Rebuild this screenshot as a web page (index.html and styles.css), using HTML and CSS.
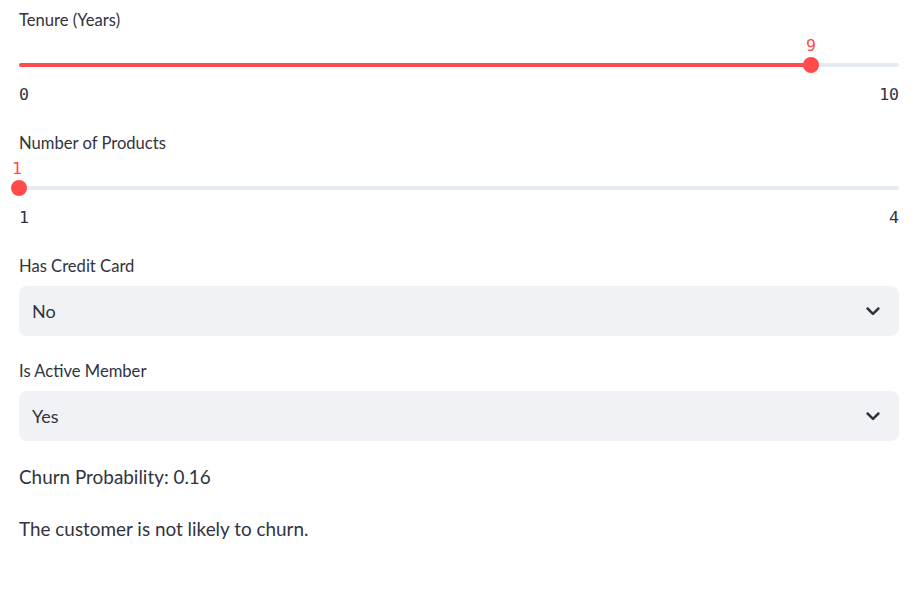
FILE: index.html
```html
<!DOCTYPE html>
<html>
<head>
<meta charset="utf-8">
<link rel="stylesheet" href="styles.css">
</head>
<body>
<div class="main">
  <div class="slider">
    <div class="label">Tenure (Years)</div>
    <div class="track">
      <div class="fill" style="width:90%"></div>
      <div class="thumb" style="left:90%"><span class="val">9</span></div>
    </div>
    <div class="ticks"><span>0</span><span>10</span></div>
  </div>
  <div class="slider">
    <div class="label">Number of Products</div>
    <div class="track">
      <div class="fill" style="width:0%"></div>
      <div class="thumb" style="left:0%"><span class="val start">1</span></div>
    </div>
    <div class="ticks"><span>1</span><span>4</span></div>
  </div>
  <div class="select-field">
    <div class="label">Has Credit Card</div>
    <div class="select">
      <span>No</span>
      <svg class="chev" width="20" height="20" viewBox="0 0 24 24"><path d="M5.5 9l6.5 6.5 6.5-6.5" fill="none" stroke="#31333f" stroke-width="3" stroke-linecap="round" stroke-linejoin="round"/></svg>
    </div>
  </div>
  <div class="select-field last">
    <div class="label">Is Active Member</div>
    <div class="select">
      <span>Yes</span>
      <svg class="chev" width="20" height="20" viewBox="0 0 24 24"><path d="M5.5 9l6.5 6.5 6.5-6.5" fill="none" stroke="#31333f" stroke-width="3" stroke-linecap="round" stroke-linejoin="round"/></svg>
    </div>
  </div>
  <p class="text first">Churn Probability: 0.16</p>
  <p class="text second">The customer is not likely to churn.</p>
</div>
</body>
</html>
```
FILE: styles.css
```css
html, body {
  margin: 0;
  padding: 0;
  background: #ffffff;
}
body {
  font-family: "Lato", "Noto Sans", sans-serif;
  color: rgb(49, 51, 63);
}
.main {
  padding: 10px 22px 0 19px;
  display: flex;
  flex-direction: column;
}
.label {
  font-size: 16.6px;
  line-height: 21px;
  height: 21px;
}
.slider {
  margin-bottom: 28px;
}
.track {
  position: relative;
  margin-top: 32px;
  height: 4px;
  border-radius: 2px;
  background: rgb(230, 234, 241);
}
.fill {
  height: 4px;
  border-radius: 2px;
  background: #ff4b4b;
}
.thumb {
  position: absolute;
  top: 50%;
  width: 16px;
  height: 16px;
  margin-left: -8px;
  margin-top: -8px;
  border-radius: 50%;
  background: #ff4b4b;
}
.val {
  position: absolute;
  left: 50%;
  bottom: 17px;
  transform: translateX(-50%);
  font-family: "DejaVu Sans Mono", monospace;
  font-size: 16.5px;
  line-height: 20px;
  color: #ff4b4b;
}
.val.start {
  margin-left: -2px;
}
.ticks {
  margin-top: 18px;
  display: flex;
  justify-content: space-between;
  font-family: "DejaVu Sans Mono", monospace;
  font-size: 16.5px;
  line-height: 20px;
}
.select-field {
  margin-bottom: 25px;
}
.select-field.last {
  margin-bottom: 24px;
}
.select {
  margin-top: 9px;
  height: 50px;
  box-sizing: border-box;
  border-radius: 8px;
  background: rgb(240, 242, 246);
  display: flex;
  align-items: center;
  justify-content: space-between;
  padding: 0 16px 0 13px;
  font-size: 18px;
}
.chev {
  display: block;
}
.text {
  margin: 0;
  font-size: 18.9px;
  line-height: 24px;
}
.text.second {
  margin-top: 28px;
}
```
